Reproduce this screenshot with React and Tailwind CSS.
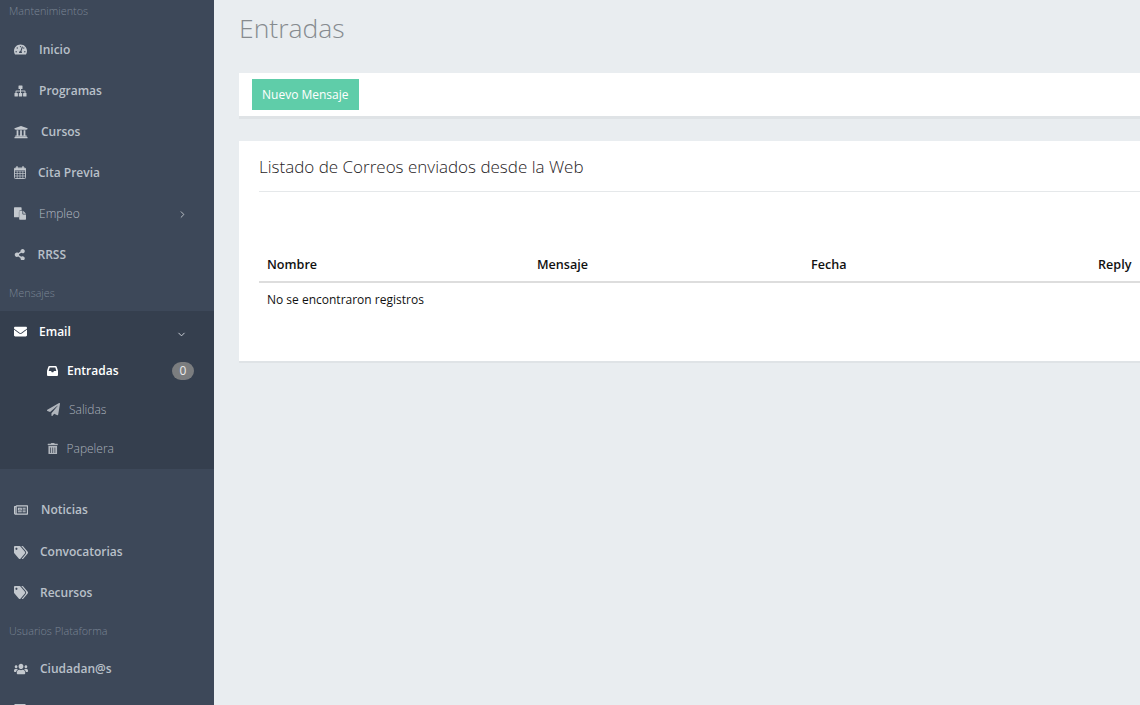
import React from "react";
import { FaTachometerAlt, FaUniversity, FaShareAlt, FaEnvelope, FaPaperPlane, FaTrashAlt, FaRegNewspaper, FaTags, FaUsers } from "react-icons/fa";
import { LuChevronRight, LuChevronDown } from "react-icons/lu";

function SitemapIcon() {
  return (
    <svg width="13" height="12" viewBox="0 0 13 12" fill="currentColor">
      <rect x="4.5" y="0.5" width="4" height="3.5" rx="0.5" />
      <rect x="0.5" y="8" width="3.4" height="3.5" rx="0.5" />
      <rect x="4.8" y="8" width="3.4" height="3.5" rx="0.5" />
      <rect x="9.1" y="8" width="3.4" height="3.5" rx="0.5" />
      <path d="M6 4h1v1.6h3.8a.7.7 0 0 1 .7.7V8h-1V6.6H7V8H6V6.6H2.5V8h-1V6.3a.7.7 0 0 1 .7-.7H6z" />
    </svg>
  );
}

function CalendarIcon() {
  return (
    <svg width="12" height="13" viewBox="0 0 12 13" fill="none" stroke="currentColor" strokeWidth="0.9">
      <rect x="0.5" y="2" width="11" height="10.5" rx="0.8" />
      <path d="M0.5 5h11M0.5 7.5h11M0.5 10h11M3.2 5v7.5M6 5v7.5M8.8 5v7.5" strokeWidth="0.7" />
      <path d="M3 0.3v3M9 0.3v3" strokeWidth="1.5" />
      <path d="M0.5 3.2h11" strokeWidth="2" />
    </svg>
  );
}

function FilesIcon() {
  return (
    <svg width="12" height="13" viewBox="0 0 12 13" fill="currentColor">
      <path fillRule="evenodd" d="M0.6 0.3h6.4a.6.6 0 0 1 .6.6v2.4h-1.2a1.6 1.6 0 0 0-1.5 1.6v5.4H0.6a.6.6 0 0 1-.6-.6V.9a.6.6 0 0 1 .6-.6z" />
      <path fillRule="evenodd" d="M5.8 3.8h2.6v3a.7.7 0 0 0 .7.7H12v4.6a.6.6 0 0 1-.6.6H5.8a.6.6 0 0 1-.6-.6V4.4a.6.6 0 0 1 .6-.6zM9.2 3.8l2.8 2.9H9.2z" />
    </svg>
  );
}

function InboxIcon() {
  return (
    <svg width="11" height="10" viewBox="0 0 11 10" fill="currentColor">
      <path fillRule="evenodd" d="M2.3 0h6.4c.4 0 .7.2.9.6l1.3 4c.1.2.1.4.1.6v3.5c0 .7-.5 1.3-1.2 1.3H1.2C.5 10 0 9.4 0 8.7V5.2c0-.2 0-.4.1-.6l1.3-4C1.6.2 1.9 0 2.3 0zM2.7 1.5 1.7 5h2.4l.6 1.3h1.6L6.9 5h2.4l-1-3.5z" />
    </svg>
  );
}

function TagsIcon() {
  return <FaTags className="w-[14px] h-[13px]" preserveAspectRatio="none" />;
}

function UsersIcon() {
  return <FaUsers className="w-[14px] h-[12px]" preserveAspectRatio="none" />;
}

function SectionLabel({ children, className }) {
  return <div className={"pl-[9px] text-[10.8px] font-light text-[#7a8594] leading-[14px] " + className}>{children}</div>;
}

function NavItem({ icon: Icon, label, slot, size = "text-[13px]", h = "h-[41px]", dim, chevron, className = "" }) {
  return (
    <div className={"flex items-center pl-[14px] pr-[27px] " + h + " " + className}>
      <span className={"shrink-0 flex items-center " + slot + " " + size + " text-[#c3c8ce]"}><Icon /></span>
      <span className={"flex-1 text-[12px] leading-[16px] " + (dim ? "font-light text-[#b4bbc4]" : "font-semibold text-[#b9c0c9]")}>{label}</span>
      {chevron && <LuChevronRight className="text-[11px] text-[#c3c8ce] mt-[2px] mr-[-1px]" />}
    </div>
  );
}

function SubItem({ icon: Icon, label, slot, active, size = "text-[11px]", badge }) {
  return (
    <div className="flex items-center h-[39px] pl-[47px] pr-[20px]">
      <span className={"shrink-0 flex items-center " + slot + " " + size + " " + (active ? "text-white" : "text-[#b0b5bc]")}><Icon /></span>
      <span className={"flex-1 text-[12px] leading-[16px] " + (active ? "font-semibold text-white" : "font-light text-[#aab1bb]")}>{label}</span>
      {badge && <span className="w-[22px] h-[18px] rounded-full bg-[#7b7d7f] text-[#ececec] text-[12px] leading-[18px] text-center">{badge}</span>}
    </div>
  );
}

function Sidebar() {
  return (
    <aside className="w-[214px] shrink-0 h-full overflow-hidden bg-[#3d4859]">
      <SectionLabel className="pt-[4px] pb-[11px]">Mantenimientos</SectionLabel>
      <div>
        <NavItem icon={FaTachometerAlt} label="Inicio" slot="w-[25px]" />
        <NavItem icon={SitemapIcon} label="Programas" slot="w-[25px]" />
        <NavItem icon={FaUniversity} label="Cursos" slot="w-[27px]" size="text-[14px]" />
        <NavItem icon={CalendarIcon} label="Cita Previa" slot="w-[24px]" />
        <NavItem icon={FilesIcon} label="Empleo" slot="w-[25px]" dim chevron />
        <NavItem icon={FaShareAlt} label="RRSS" slot="w-[23.5px]" size="text-[11.5px]" />
      </div>
      <SectionLabel className="pt-[11px] pb-[11px]">Mensajes</SectionLabel>
      <div className="bg-[#353f4e] h-[158px]">
        <div className="flex items-center h-[40px] pt-[1px] pl-[14px] pr-[27px]">
          <span className="w-[25px] shrink-0 text-[13px] text-white flex items-center"><FaEnvelope /></span>
          <span className="flex-1 text-[12px] leading-[16px] font-semibold text-white">Email</span>
          <LuChevronDown className="text-[11px] text-[#d8dce2] mt-[6px]" />
        </div>
        <SubItem icon={InboxIcon} label="Entradas" slot="w-[20px]" active badge="0" />
        <SubItem icon={FaPaperPlane} label="Salidas" slot="w-[22px]" size="text-[13px]" />
        <SubItem icon={FaTrashAlt} label="Papelera" slot="w-[19.5px]" size="text-[11.5px]" />
      </div>
      <div className="pt-[20px]">
        <NavItem icon={FaRegNewspaper} label="Noticias" slot="w-[27px]" size="text-[14px]" />
        <NavItem icon={TagsIcon} label="Convocatorias" slot="w-[26px]" h="h-[42px]" className="pt-[2px]" />
        <NavItem icon={TagsIcon} label="Recursos" slot="w-[26px]" />
      </div>
      <SectionLabel className="pt-[11px] pb-[12px]">Usuarios Plataforma</SectionLabel>
      <NavItem icon={UsersIcon} label="Ciudadan@s" slot="w-[26px]" h="h-[38px]" />
      <div className="ml-[14px] mt-[16px] w-[12px] h-[12px] border border-[#c3c8ce] rounded-[1px]" />
    </aside>
  );
}

function Main() {
  return (
    <main className="flex-1 min-w-0 h-full overflow-hidden bg-[#e9edf0] pl-[25px]">
      <h1 className="pt-[10px] text-[26.5px] leading-[36px] font-light text-[#868b8f]">Entradas</h1>
      <div className="mt-[27px] h-[46px] bg-white border-b-[3px] border-[#dfe3e6] pl-[13px] pt-[6px]">
        <button className="h-[31px] px-[10px] bg-[#5fcda9] text-white text-[12px] leading-[31px]">Nuevo Mensaje</button>
      </div>
      <section className="mt-[22px] h-[222px] bg-white border-b-[2px] border-[#dfe3e6] pl-[20px]">
        <h2 className="pt-[14px] text-[17px] leading-[24px] font-light text-[#1f2326]">Listado de Correos enviados desde la Web</h2>
        <div className="mt-[12px] border-t border-[#e5e8ea]" />
        <table className="mt-[58px] w-full table-fixed text-left text-[12px] text-[#111111]">
          <thead>
            <tr className="border-b-2 border-[#dddddd] h-[32px] text-[12.6px]">
              <th className="w-[270px] pl-[8px] pb-[1px] font-semibold">Nombre</th>
              <th className="w-[274px] pl-[8px] pb-[1px] font-semibold">Mensaje</th>
              <th className="pl-[8px] pb-[1px] font-semibold">Fecha</th>
              <th className="w-[50px] pl-[8px] pb-[1px] font-semibold">Reply</th>
            </tr>
          </thead>
          <tbody>
            <tr className="h-[35px]">
              <td className="pl-[8px]" colSpan={4}>No se encontraron registros</td>
            </tr>
          </tbody>
        </table>
      </section>
    </main>
  );
}

export default function App() {
  return (
    <div className="flex w-[1140px] h-[705px] overflow-hidden font-['Open_Sans',sans-serif]">
      <Sidebar />
      <Main />
    </div>
  );
}
